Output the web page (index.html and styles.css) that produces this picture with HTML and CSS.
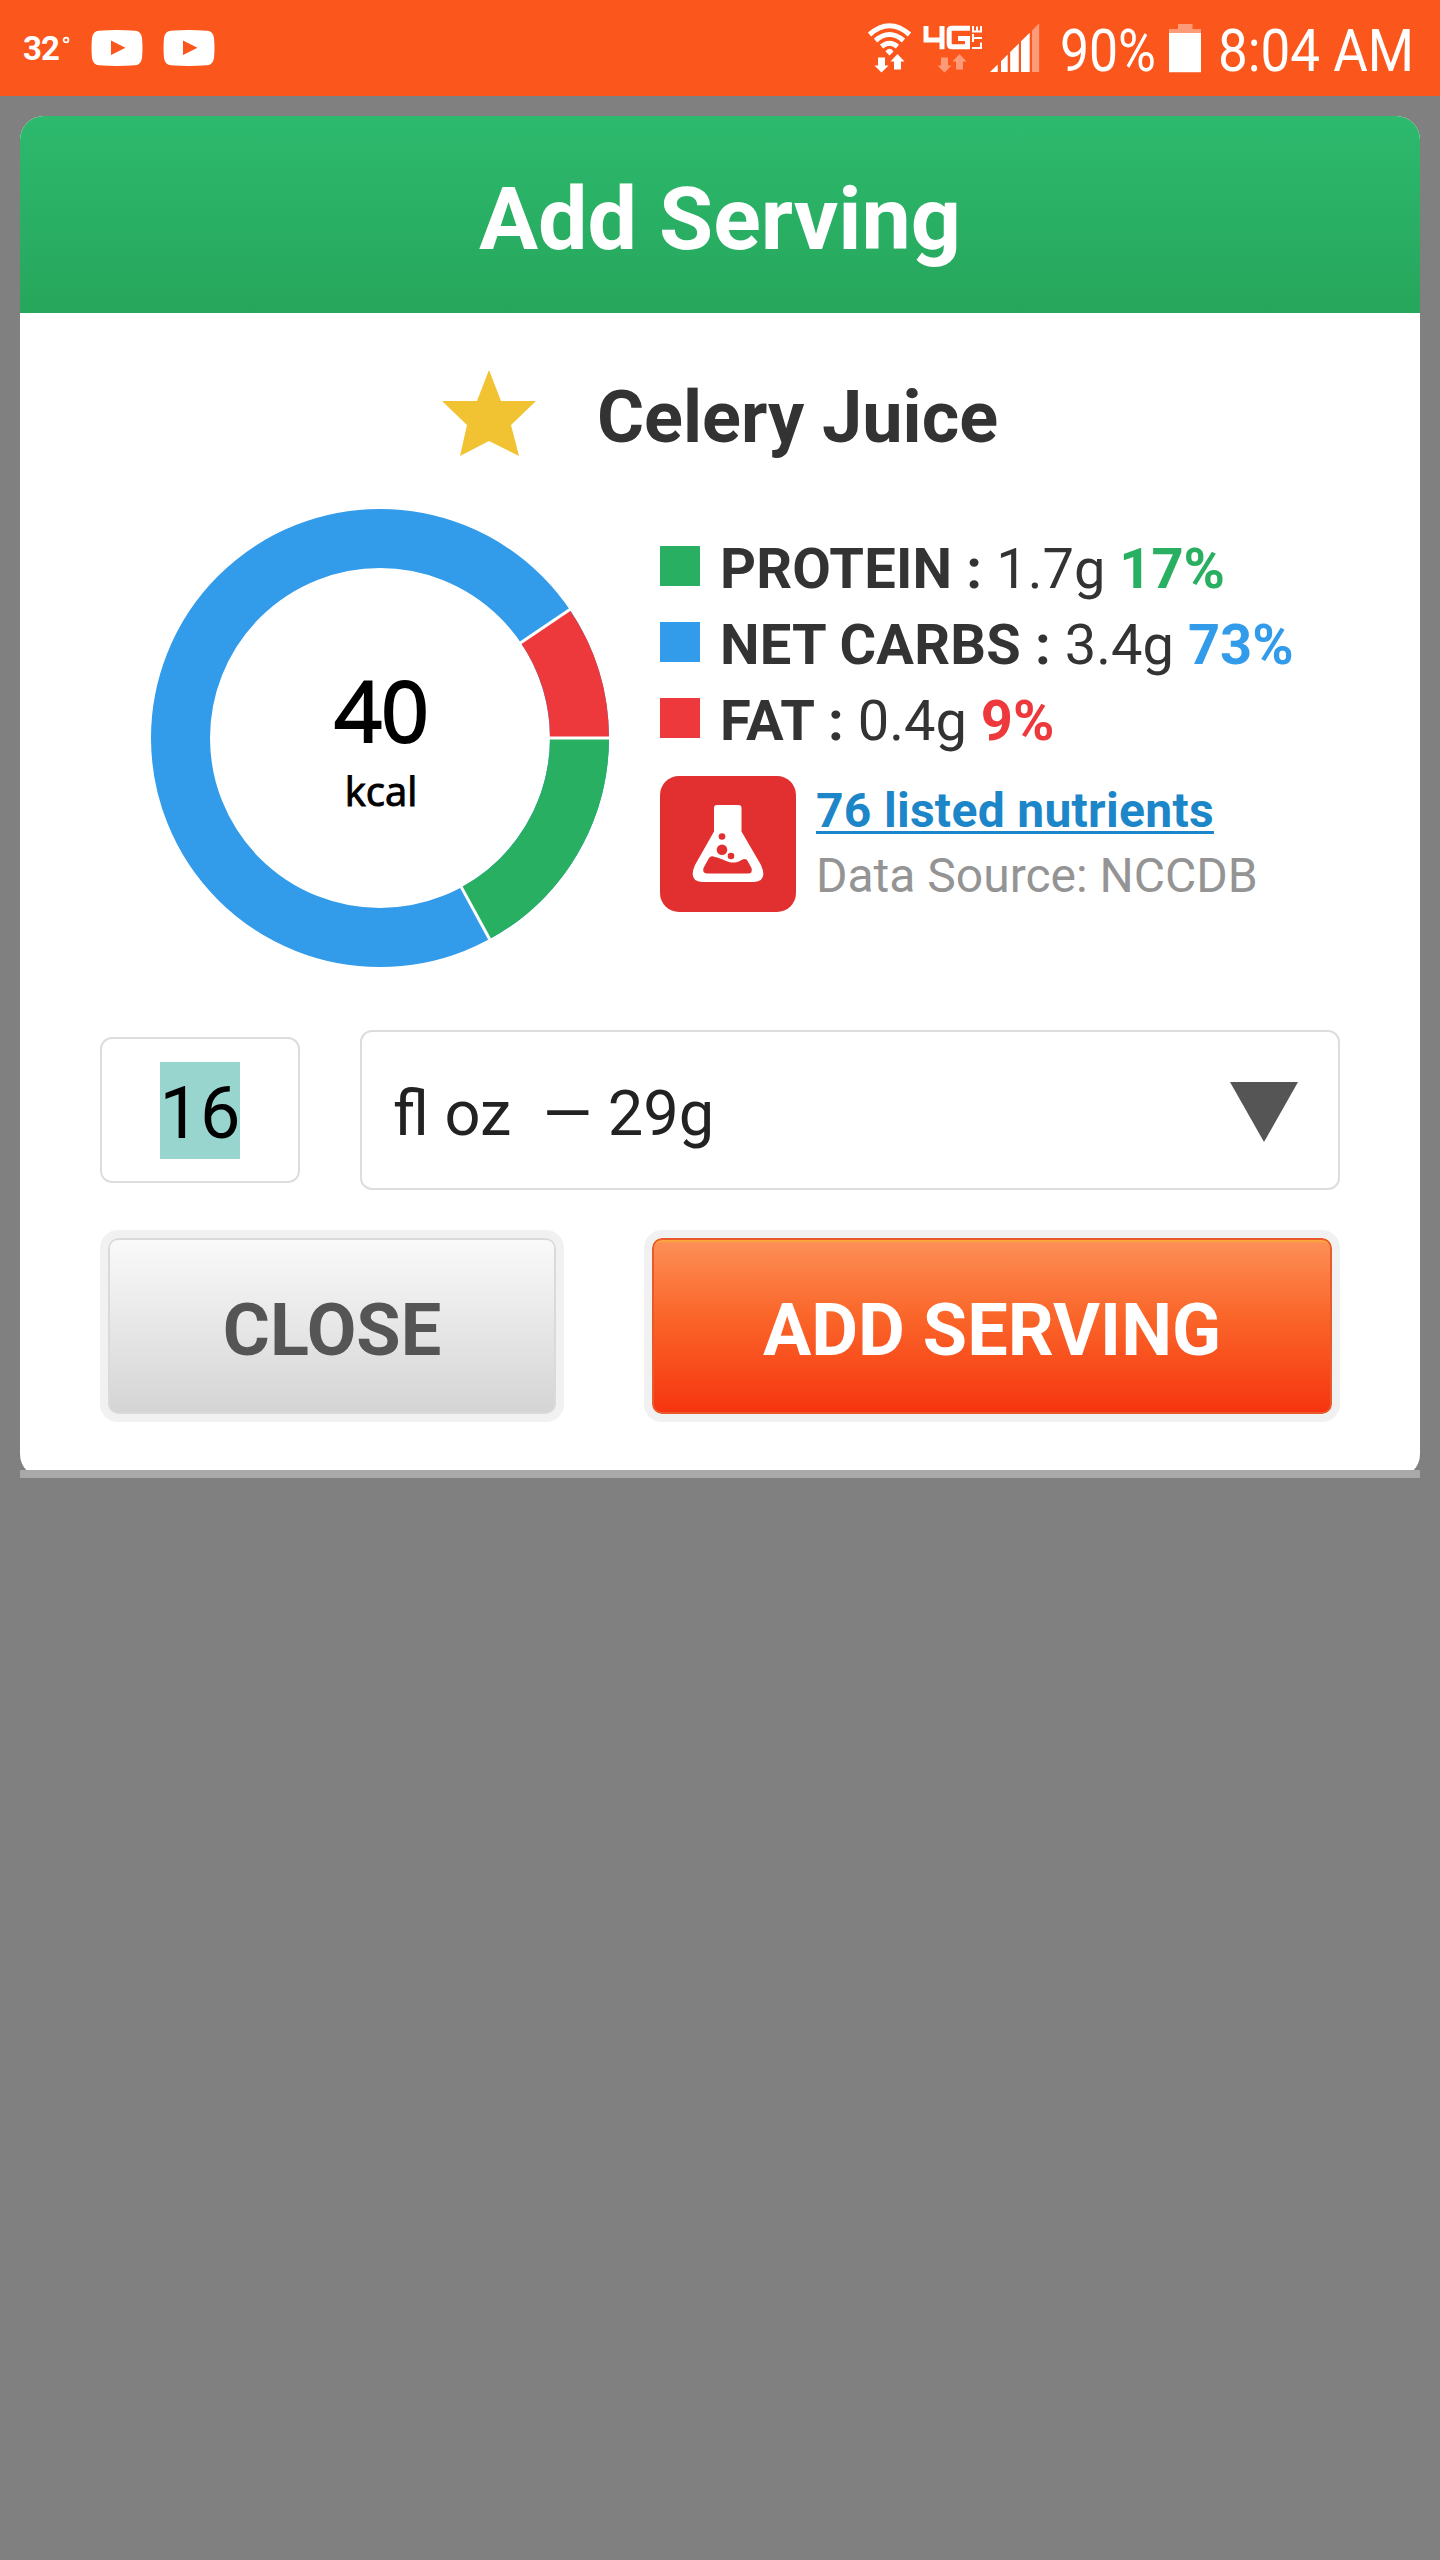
FILE: index.html
```html
<!DOCTYPE html>
<html lang="en">
<head>
<meta charset="utf-8">
<title>Add Serving</title>
<link rel="stylesheet" href="styles.css">
</head>
<body>
<header class="status-bar">
  <div class="status-group">
    <span class="temperature">32<svg class="degree" viewBox="0 0 8 8"><circle cx="4" cy="4" r="2.400"/></svg></span>
    <svg class="video" viewBox="0 0 52 36"><path fill-rule="evenodd" d="M8 .8Q26-.8 44 .8Q50 1 51 8Q52 18 51 28Q50 35 44 35.2Q26 36.8 8 35.2Q2 35 1 28Q0 18 1 8Q2 1 8 .8ZM20 10.5V25L34.500 17.700Z"/></svg>
    <svg class="video" viewBox="0 0 52 36"><path fill-rule="evenodd" d="M8 .8Q26-.8 44 .8Q50 1 51 8Q52 18 51 28Q50 35 44 35.2Q26 36.8 8 35.2Q2 35 1 28Q0 18 1 8Q2 1 8 .8ZM20 10.5V25L34.500 17.700Z"/></svg>
  </div>
  <svg class="status-icons" viewBox="0 0 572 96">
    <g class="wifi">
      <path d="M1.500 34.500Q21.500 17 41.500 34.500M7.500 40.500Q21.500 28.500 35.500 40.500M13.500 46.500Q21.500 40 29.500 46.500"/>
    </g>
    <path class="solid" d="M21.500 48.800Q24 48.800 25.500 51.500L21.500 55.500L17.500 51.500Q19 48.800 21.500 48.800Z"/>
    <path class="solid" d="M10 57.500H17V65.500H20.500L13.500 72.500L6.500 65.500H10ZM26 69.500V61.500H22.500L29.500 54L36.500 61.500H33V69.500Z"/>
    <path class="faint" d="M73 57.500H80V65.500H83.500L76.500 72.500L69.500 65.500H73ZM88 69.500V61.500H84.500L91.500 54L98.500 61.500H95V69.500Z"/>
    <path class="network" d="M58 26V40H74M74 26V49.300M102 28.200H84Q81.200 28.200 81.200 31V44Q81.200 46.800 84 46.800H99.500V38.500H90"/>
    <path class="lte" d="M104 48H113V42.500M104 38H114M105 34V42M104 31.500H114M105 32V26M109 32V26.500M113 32V26"/>
    <path class="solid" d="M122 72L129.700 64.500V72ZM133 61.200L139.700 54.500V72H133ZM142.200 52L150.800 43.500V72H142.200ZM153 41.300L161.700 32.700V72H153Z"/>
    <path class="faint" d="M164 30.500L171.200 23.300V72H164Z"/>
    <text class="status-text" x="192" y="71" textLength="96" lengthAdjust="spacingAndGlyphs">90%</text>
    <path class="faint" d="M301 29H310V24H324.500V29H333V33H301Z"/>
    <path class="solid" d="M301 33H333V72.300H301Z"/>
    <text class="status-text" x="350" y="71" textLength="196" lengthAdjust="spacingAndGlyphs">8:04 AM</text>
  </svg>
</header>
<main class="modal">
  <h1 class="modal-title">Add Serving</h1>
  <section class="food">
    <svg class="star" viewBox="0 0 98 92"><path d="M49 3L61 34H96L71 58L79 89L49 74L20 89L27 58L2 34H37Z"/></svg>
    <h2 class="food-name">Celery Juice</h2>
  </section>
  <section class="summary">
    <svg class="donut" viewBox="-230 -230 460 460">
      <g class="ring">
        <circle r="199.500" class="carbs"/>
        <circle r="199.500" pathLength="360" stroke-dasharray="61.400 298.600" class="protein"/>
        <circle r="199.500" pathLength="360" stroke-dasharray="34.100 325.900" stroke-dashoffset="34.100" class="fat"/>
      </g>
      <g class="gaps"><path d="M165 0H232"/><path d="M165 0H232" transform="rotate(61.4)"/><path d="M165 0H232" transform="rotate(-34.1)"/></g>
      <text class="energy" x="1" y="4">40</text>
      <text class="energy-unit" x="1" y="68">kcal</text>
    </svg>
    <div class="facts">
      <ul class="macros">
        <li class="macro protein"><i class="swatch"></i><b>PROTEIN :</b> 1.7g <b class="percent">17%</b></li>
        <li class="macro carbs"><i class="swatch"></i><b>NET CARBS :</b> 3.4g <b class="percent">73%</b></li>
        <li class="macro fat"><i class="swatch"></i><b>FAT :</b> 0.4g <b class="percent">9%</b></li>
      </ul>
      <div class="source">
        <svg class="flask" viewBox="0 0 136 136">
          <rect width="136" height="136" rx="19"/>
          <path class="glass" d="M57 29H78.500Q81.500 29 81.500 32V55.500L101 89Q108 105 94 106H42Q28 105 35 89L54 55.500V32Q54 29 57 29Z"/>
          <path d="M49 82Q51 79 55 81C64 83 67 87 75 86.500C81 86 83 81 87 84L91.500 92Q93 97.500 88 97.500H47Q42 97 43.500 92Z"/>
          <circle cx="62" cy="60.500" r="3.300"/><circle cx="62" cy="73.700" r="5.300"/><circle cx="71" cy="80" r="3.300"/>
        </svg>
        <div class="source-text">
          <a class="nutrients" href="#">76 listed nutrients</a>
          <span class="database">Data Source: NCCDB</span>
        </div>
      </div>
    </div>
  </section>
  <section class="amount">
    <div class="quantity"><span class="selected">16</span></div>
    <div class="unit"><span class="unit-text">fl oz&nbsp; — 29g</span><svg class="arrow" viewBox="0 0 68 60"><path d="M0 0H68L34 60Z"/></svg></div>
  </section>
  <section class="actions">
    <button class="button close">CLOSE</button>
    <button class="button add">ADD SERVING</button>
  </section>
</main>
</body>
</html>
```
FILE: styles.css
```css
* { box-sizing: border-box; }
body { margin: 0; min-height: 2560px; background: #808080; color: #333; font-family: Roboto, sans-serif; }
h1, h2, ul { margin: 0; padding: 0; }

.status-bar { display: flex; justify-content: space-between; height: 96px; background: #fb561b; }
.status-group { display: flex; align-items: center; gap: 20px; padding-left: 23px; }
.temperature { display: flex; width: 48px; padding-top: 2px; color: #fff; font-size: 33px; font-weight: 700; letter-spacing: -1px; line-height: 38px; }
.degree { width: 8px; height: 8px; margin: 6px 0 0 3px; fill: none; stroke: #fff; stroke-width: 1.8; }
.video { width: 52px; height: 36px; fill: #fff; }
.status-icons { width: 572px; height: 96px; }
.solid { fill: #fff; }
.faint { fill: #fd9b78; }
.wifi { fill: none; stroke: #fff; stroke-width: 5; }
.network { fill: none; stroke: #fff; stroke-width: 5; }
.lte { fill: none; stroke: #fff; stroke-width: 2; }
.status-text { fill: #fff; font-size: 60px; }

.modal { display: flex; flex-direction: column; width: 1400px; height: 1362px; margin: 20px auto 0; border-radius: 24px; background: #fff; }
.modal::after { content: ""; height: 8px; margin-top: auto; background: #a9a9a9; }
.modal-title { height: 197px; border-radius: 24px 24px 0 0; background: linear-gradient(#2dba6e, #26a65b); color: #fff; font-size: 88px; line-height: 205px; text-align: center; }
.food { display: flex; gap: 59px; height: 195px; padding: 54px 0 0 420px; }
.star { width: 98px; height: 92px; fill: #f1c232; }
.food-name { font-size: 72px; line-height: 102px; }

.summary { display: flex; gap: 50px; height: 460px; padding-left: 130px; }
.donut { width: 460px; height: 460px; }
.ring { fill: none; stroke-width: 59; }
.ring .carbs { stroke: #329bea; }
.ring .protein { stroke: #29af61; }
.ring .fat { stroke: #ee393c; }
.gaps { stroke: #fff; stroke-width: 3; }
.energy, .energy-unit { font-family: "Open Sans", sans-serif; text-anchor: middle; fill: #000; stroke: #000; }
.energy { font-size: 84px; letter-spacing: -1px; stroke-width: 2; }
.energy-unit { font-size: 40px; stroke-width: 1; }

.facts { padding-top: 23px; }
.macros { list-style: none; }
.macro { height: 76px; font-size: 56px; line-height: 76px; white-space: nowrap; }
.macro b:not(.percent) { letter-spacing: .2px; }
.swatch { display: inline-block; width: 40px; height: 40px; margin-right: 20px; background: currentColor; vertical-align: 2px; }
.macro.protein .swatch, .protein .percent { color: #29af61; }
.macro.carbs .swatch, .carbs .percent { color: #329bea; }
.macro.fat .swatch, .fat .percent { color: #ee393c; }
.source { display: flex; gap: 20px; margin-top: 17px; }
.flask { width: 136px; height: 136px; fill: #e22f30; }
.flask .glass { fill: #fff; }
.source-text { display: flex; flex-direction: column; padding-top: 2px; }
.nutrients { height: 65px; color: #1c86c8; font-size: 48px; font-weight: 700; letter-spacing: .3px; line-height: 66px; text-decoration-thickness: 3px; text-underline-offset: 4px; text-decoration-skip-ink: none; }
.database { color: #949494; font-size: 48px; line-height: 66px; }

.amount { display: flex; align-items: center; gap: 60px; height: 160px; margin-top: 62px; padding: 0 80px; }
.quantity, .unit { border: 2px solid #ddd; border-radius: 12px; }
.quantity { display: flex; align-items: center; justify-content: center; width: 200px; height: 146px; }
.selected { height: 97px; background: #99d5cf; color: #000; font-size: 72px; line-height: 104px; }
.unit { display: flex; align-items: center; justify-content: space-between; flex: 1; height: 160px; padding: 0 40px 0 31px; color: #222; font-size: 63.2px; }
.unit-text { padding-top: 6px; }
.arrow { width: 68px; height: 60px; margin-top: 4px; fill: #555; }

.actions { display: flex; justify-content: space-between; margin-top: 40px; padding: 0 80px; }
.button { height: 192px; padding: 8px 0 0; border: 8px solid #f1f1f1; border-radius: 18px; font: 700 72px Roboto, sans-serif; }
.close { width: 464px; background: linear-gradient(#fafafa, #d4d4d4) padding-box; box-shadow: inset 0 0 0 2px #dadada; color: #555; }
.add { width: 696px; background: linear-gradient(#fd9159, #fa6529 45%, #f6340f) padding-box; box-shadow: inset 0 0 0 2px #e85a2b, inset 0 4px 0 #fca53b; color: #fff; }
```
